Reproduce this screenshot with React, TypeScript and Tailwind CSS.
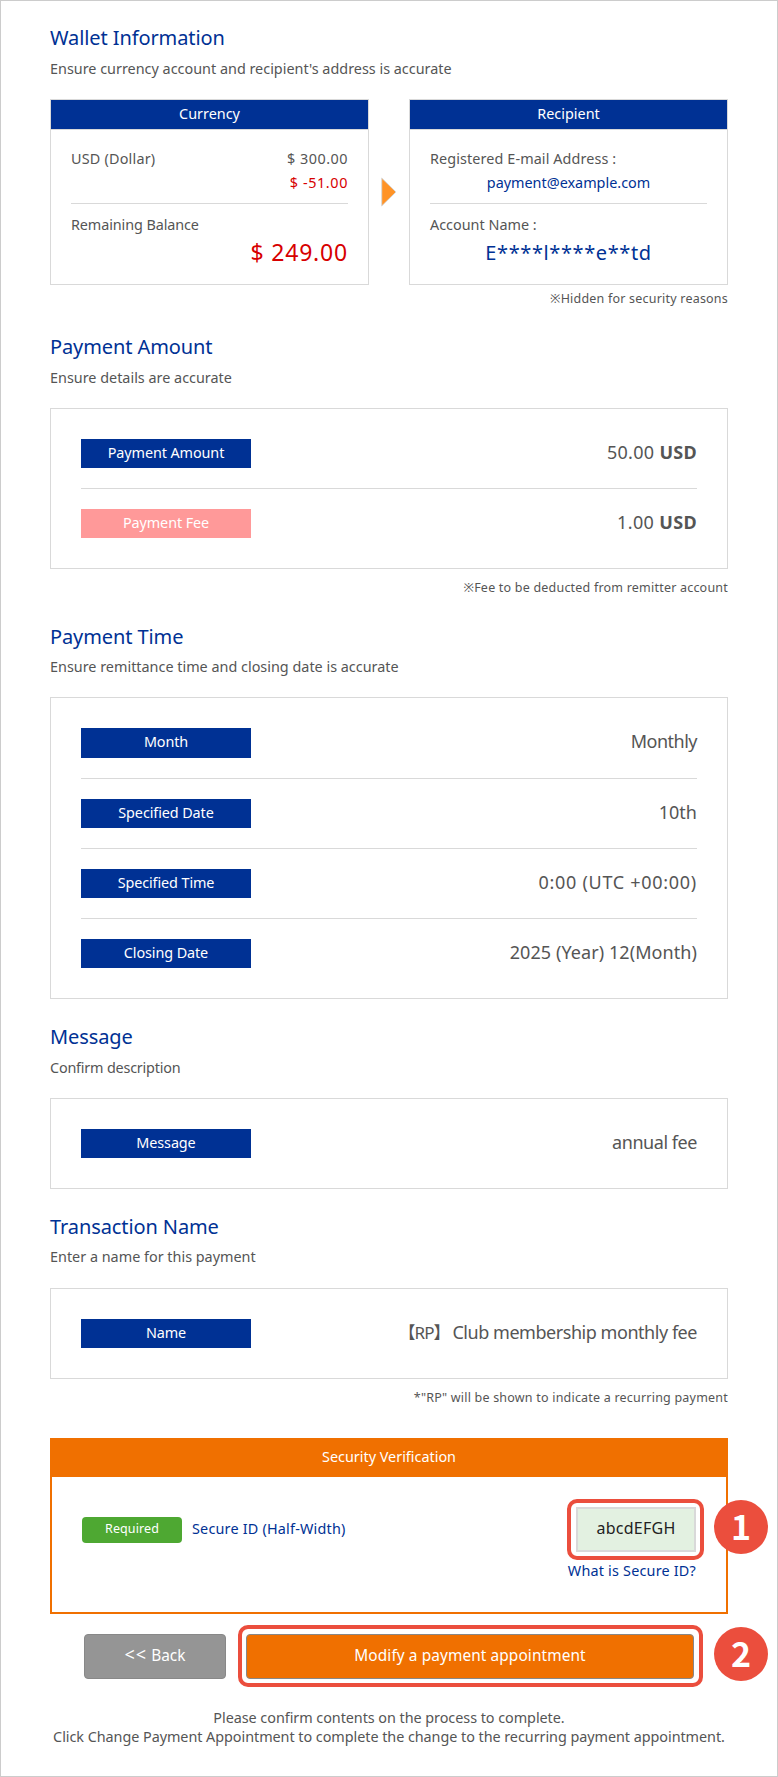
import type { ReactNode } from "react";

interface Row {
  label: string;
  value: ReactNode;
  pink?: boolean;
  tall?: boolean;
  spacing?: string;
}

const amountRows: Row[] = [
  { label: "Payment Amount", value: <>50.00 <b>USD</b></>, spacing: "tracking-[0.3px]" },
  { label: "Payment Fee", value: <>1.00 <b>USD</b></>, pink: true, spacing: "tracking-[0.35px]" },
];

const timeRows: Row[] = [
  { label: "Month", value: "Monthly", tall: true, spacing: "tracking-[-0.5px]" },
  { label: "Specified Date", value: "10th" },
  { label: "Specified Time", value: "0:00 (UTC +00:00)", spacing: "tracking-[0.72px]" },
  { label: "Closing Date", value: "2025 (Year) 12(Month)", spacing: "tracking-[0.08px]" },
];

const messageRows: Row[] = [{ label: "Message", value: "annual fee", spacing: "tracking-[-0.45px]" }];

const nameRows: Row[] = [
  {
    label: "Name",
    value: (
      <>
        <span className="mr-[3px] text-[17px] tracking-[-1px]">【RP】</span>Club membership monthly fee
      </>
    ),
    spacing: "tracking-[-0.46px]",
  },
];

interface HeadingProps {
  title: string;
  text: string;
  className?: string;
  textClass?: string;
}

const Heading = ({ title, text, className = "", textClass = "mt-1.5" }: HeadingProps) => (
  <div className={className}>
    <h2 className="text-[20px] leading-[30px] tracking-[-0.1px] text-[#003194]">{title}</h2>
    <p className={`leading-5 ${textClass}`}>{text}</p>
  </div>
);

const Note = ({ children, className }: { children: ReactNode; className: string }) => (
  <p className={`text-right text-[12.5px] leading-5 tracking-[0.21px] ${className}`}>{children}</p>
);

const RowCard = ({ rows, className = "mt-5" }: { rows: Row[]; className?: string }) => (
  <dl className={`border border-[#d9d9d9] p-[30px] ${className}`}>
    {rows.map((row, i) => (
      <div
        key={row.label}
        className={`flex items-start justify-between ${i > 0 ? "mt-5 border-t border-[#d9d9d9] pt-5" : ""}`}
      >
        <dt
          className={`w-[170px] text-center leading-[27px] tracking-[-0.1px] text-white ${row.tall ? "h-[30px]" : "h-[29px]"} ${
            row.pink ? "bg-[#ff9999]" : "bg-[#003194]"
          }`}
        >
          {row.label}
        </dt>
        <dd className={`h-[27px] text-[18px] leading-[27px] ${row.spacing ?? ""}`}>{row.value}</dd>
      </div>
    ))}
  </dl>
);

const Panel = ({ title, children }: { title: string; children: ReactNode }) => (
  <div className="h-[186px] w-[319px] border border-[#d9d9d9]">
    <h3 className="h-[30px] border-b border-[#d9d9d9] bg-[#003194] text-center leading-[28px] text-white">{title}</h3>
    <div className="px-5 pt-[17px]">{children}</div>
  </div>
);

const Step = ({ n, className }: { n: number; className: string }) => (
  <span
    className={`absolute flex size-[54px] items-center justify-center rounded-full bg-[#eb4e3d] pb-0.5 font-['Noto_Sans_CJK_JP',sans-serif] text-[34px] leading-none font-bold text-white ${className}`}
  >
    {n}
  </span>
);

export default function App() {
  return (
    <main className="h-[1777px] w-[778px] border border-[#cccccc] bg-white px-[49px] pt-[22px] font-['Noto_Sans','Noto_Sans_CJK_JP',sans-serif] text-[14.4px] text-[#555555]">
      <Heading title="Wallet Information" text="Ensure currency account and recipient's address is accurate" />
      <div className="mt-5 flex items-start justify-between">
        <Panel title="Currency">
          <div className="flex justify-between leading-6">
            <span className="tracking-[0.2px]">USD (Dollar)</span>
            <span className="tracking-[0.5px]">$ 300.00</span>
          </div>
          <p className="h-[33px] border-b border-[#d9d9d9] text-right leading-6 tracking-[0.6px] text-[#d70000]">$ -51.00</p>
          <p className="pt-[9px] leading-6 tracking-[-0.1px]">Remaining Balance</p>
          <p className="text-right text-[23px] leading-[30px] tracking-[0.8px] text-[#d70000]">$ 249.00</p>
        </Panel>
        <svg className="mt-[78px] h-[30px] w-4" viewBox="0 0 16 30">
          <path d="M.7 1v28L15 15z" fill="#ff9326" stroke="#d9d9d9" strokeWidth="1" />
        </svg>
        <Panel title="Recipient">
          <p className="leading-6 tracking-[0.1px]">Registered E-mail Address :</p>
          <p className="h-[33px] border-b border-[#d9d9d9] text-center leading-6 text-[#003194]">payment@example.com</p>
          <p className="pt-[9px] leading-6">Account Name :</p>
          <p className="text-center text-[20px] leading-8 tracking-[0.6px] text-[#003194]">E****l****e**td</p>
        </Panel>
      </div>
      <Note className="mt-1">※Hidden for security reasons</Note>

      <Heading className="mt-[23px]" title="Payment Amount" text="Ensure details are accurate" />
      <RowCard rows={amountRows} />
      <Note className="mt-[9px]">※Fee to be deducted from remitter account</Note>

      <Heading className="mt-6" textClass="mt-[5px]" title="Payment Time" text="Ensure remittance time and closing date is accurate" />
      <RowCard rows={timeRows} />

      <Heading className="mt-[23px]" textClass="mt-1.5 tracking-[-0.2px]" title="Message" text="Confirm description" />
      <RowCard rows={messageRows} />

      <Heading className="mt-[23px]" textClass="mt-[5px]" title="Transaction Name" text="Enter a name for this payment" />
      <RowCard className="mt-[21px]" rows={nameRows} />
      <Note className="mt-[9px]">*"RP" will be shown to indicate a recurring payment</Note>

      <section className="relative mt-[30px] h-44 border-2 border-[#f07000]">
        <h3 className="h-[37px] bg-[#f07000] text-center leading-[34px] text-white">Security Verification</h3>
        <div className="flex items-start justify-between px-[30px] pt-[30px]">
          <div className="mt-2.5 flex">
            <span className="h-[26px] w-[100px] rounded bg-[#4ea832] text-center text-[12.5px] leading-6 tracking-[0.1px] text-white">
              Required
            </span>
            <label className="ml-2.5 leading-6 tracking-[0.2px] text-[#003194]">Secure ID (Half-Width)</label>
          </div>
          <div className="flex flex-col items-end">
            <div className="relative h-[45px] w-[120px] border-2 border-[#d9d9d9] bg-[#e3f1e1] text-center text-[16px] leading-[39px] tracking-[0.25px] text-[#222222]">
              abcdEFGH
              <span className="absolute -top-2.5 -left-[11px] h-[61px] w-[137px] rounded-[10px] border-4 border-[#eb4e3d]" />
            </div>
            <a className="mt-[9px] leading-5 tracking-[0.2px] text-[#003194]">What is Secure ID?</a>
          </div>
        </div>
        <Step n={1} className="top-[60px] -right-[42px]" />
      </section>

      <div className="relative mt-5 flex justify-between px-[34px]">
        <button className="h-[45px] w-[142px] rounded border border-[#888888] bg-[#959595] pb-0.5 text-[15.4px] text-white">
          <span className="text-[18px] leading-none tracking-[1px]">&lt;&lt;</span> Back
        </button>
        <div className="relative">
          <button className="h-[45px] w-[448px] rounded border border-[#888888] bg-[#f07000] pb-0.5 text-[15.4px] tracking-[0.1px] text-white">
            Modify a payment appointment
          </button>
          <span className="absolute -top-[9px] -left-2 h-[62px] w-[465px] rounded-[10px] border-4 border-[#eb4e3d]" />
        </div>
        <Step n={2} className="-top-[7px] -right-10" />
      </div>

      <p className="mt-[29px] text-center leading-[19px] tracking-[-0.05px] whitespace-nowrap">
        Please confirm contents on the process to complete.
        <br />
        Click Change Payment Appointment to complete the change to the recurring payment appointment.
      </p>
    </main>
  );
}
